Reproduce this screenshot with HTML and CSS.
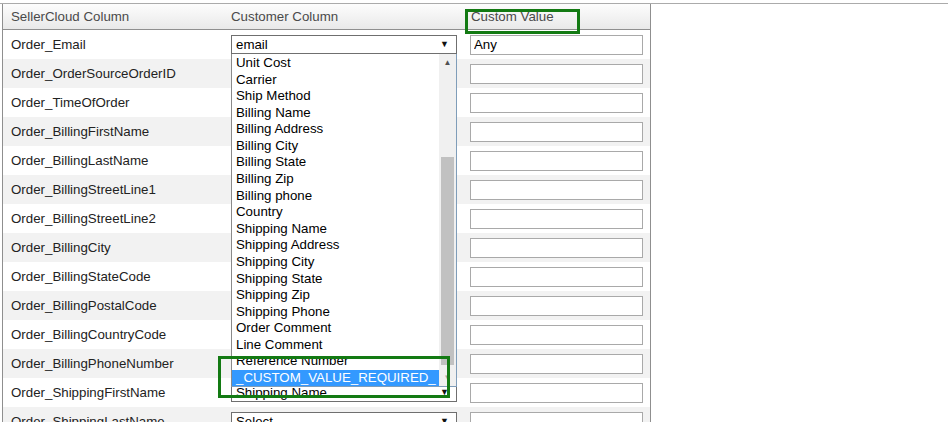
FILE: index.html
```html
<!DOCTYPE html>
<html lang="en">
<head>
  <meta charset="UTF-8">
  <title>Column Mapping</title>
  <link rel="stylesheet" href="styles.css">
</head>
<body>

  <div class="sheet">
    <div class="map-table">
      <!-- Header -->
      <div class="row head">
        <div class="cell c1">SellerCloud Column</div>
        <div class="cell c2">Customer Column</div>
        <div class="cell c3">Custom Value<span class="mark mark-head"></span></div>
      </div>

      <div class="row">
        <div class="cell c1">Order_Email</div>
        <div class="cell c2"><div class="pick">email<span class="arrow">&#9660;</span></div></div>
        <div class="cell c3"><input class="val" type="text" value="Any"></div>
      </div>
      <!-- rows 2-12: their selects sit under the open list -->
      <div class="row alt">
        <div class="cell c1">Order_OrderSourceOrderID</div>
        <div class="cell c2"><div class="pick"></div></div>
        <div class="cell c3"><input class="val" type="text"></div>
      </div>
      <div class="row">
        <div class="cell c1">Order_TimeOfOrder</div>
        <div class="cell c2"><div class="pick"></div></div>
        <div class="cell c3"><input class="val" type="text"></div>
      </div>
      <div class="row alt">
        <div class="cell c1">Order_BillingFirstName</div>
        <div class="cell c2"><div class="pick"></div></div>
        <div class="cell c3"><input class="val" type="text"></div>
      </div>
      <div class="row">
        <div class="cell c1">Order_BillingLastName</div>
        <div class="cell c2"><div class="pick"></div></div>
        <div class="cell c3"><input class="val" type="text"></div>
      </div>
      <div class="row alt">
        <div class="cell c1">Order_BillingStreetLine1</div>
        <div class="cell c2"><div class="pick"></div></div>
        <div class="cell c3"><input class="val" type="text"></div>
      </div>
      <div class="row">
        <div class="cell c1">Order_BillingStreetLine2</div>
        <div class="cell c2"><div class="pick"></div></div>
        <div class="cell c3"><input class="val" type="text"></div>
      </div>
      <div class="row alt">
        <div class="cell c1">Order_BillingCity</div>
        <div class="cell c2"><div class="pick"></div></div>
        <div class="cell c3"><input class="val" type="text"></div>
      </div>
      <div class="row">
        <div class="cell c1">Order_BillingStateCode</div>
        <div class="cell c2"><div class="pick"></div></div>
        <div class="cell c3"><input class="val" type="text"></div>
      </div>
      <div class="row alt">
        <div class="cell c1">Order_BillingPostalCode</div>
        <div class="cell c2"><div class="pick"></div></div>
        <div class="cell c3"><input class="val" type="text"></div>
      </div>
      <div class="row">
        <div class="cell c1">Order_BillingCountryCode</div>
        <div class="cell c2"><div class="pick"></div></div>
        <div class="cell c3"><input class="val" type="text"></div>
      </div>
      <div class="row alt">
        <div class="cell c1">Order_BillingPhoneNumber</div>
        <div class="cell c2"><div class="pick"></div></div>
        <div class="cell c3"><input class="val" type="text"></div>
      </div>
      <div class="row">
        <div class="cell c1">Order_ShippingFirstName</div>
        <div class="cell c2"><div class="pick">Shipping Name<span class="arrow">&#9660;</span></div></div>
        <div class="cell c3"><input class="val" type="text"></div>
      </div>
      <div class="row alt">
        <div class="cell c1">Order_ShippingLastName</div>
        <div class="cell c2"><div class="pick">Select<span class="arrow">&#9660;</span></div></div>
        <div class="cell c3"><input class="val" type="text"></div>
      </div>

      <!-- Open dropdown of the first row -->
      <div class="droplist">
        <ul class="options">
          <li>Unit Cost</li>
          <li>Carrier</li>
          <li>Ship Method</li>
          <li>Billing Name</li>
          <li>Billing Address</li>
          <li>Billing City</li>
          <li>Billing State</li>
          <li>Billing Zip</li>
          <li>Billing phone</li>
          <li>Country</li>
          <li>Shipping Name</li>
          <li>Shipping Address</li>
          <li>Shipping City</li>
          <li>Shipping State</li>
          <li>Shipping Zip</li>
          <li>Shipping Phone</li>
          <li>Order Comment</li>
          <li>Line Comment</li>
          <li>Reference Number</li>
          <li class="selected">_CUSTOM_VALUE_REQUIRED_</li>
        </ul>
        <div class="scrollbar">
          <span class="sb-btn up">&#9650;</span>
          <div class="sb-track"><div class="sb-thumb"></div></div>
          <span class="sb-btn down">&#9660;</span>
        </div>
      </div>

      <span class="mark mark-list"></span>
    </div>
  </div>

</body>
</html>
```

FILE: styles.css
```css
body {
  margin: 0;
  padding-top: 3px;
  font-family: 'Liberation Sans', Arial, sans-serif;
  font-size: 13.3px;
  color: #222;
  background-color: #fff;
  overflow: hidden;
}

.sheet {
  border-top: 1px solid #ababab;
}

.map-table {
  position: relative;
  box-sizing: border-box;
  width: 649px;
  margin-left: 2px;
  border-left: 1px solid #8f8f8f;
  border-right: 1px solid #8f8f8f;
}

.row {
  display: flex;
  align-items: center;
  height: 29px;
}

.row.alt {
  background-color: #f2f2f2;
}

.row.head {
  height: 25px;
  border-bottom: 1px solid #8f8f8f;
  background: linear-gradient(#fdfdfd, #e9e9e9);
  color: #4a4a4a;
}

.cell {
  box-sizing: border-box;
  padding-left: 8px;
  white-space: nowrap;
}

.c1 { width: 220px; }
.c2 { width: 240px; }
.c3 {
  flex: 1;
  padding-left: 7px;
  position: relative;
}

.row.head .c3 {
  padding-left: 8px;
}

.pick {
  position: relative;
  box-sizing: border-box;
  width: 226px;
  height: 19px;
  line-height: 17px;
  padding-left: 4px;
  border: 1px solid #6f6f6f;
  background-color: #fff;
  color: #000;
}

.pick .arrow {
  position: absolute;
  right: 7px;
  top: 0;
  font-size: 9px;
  color: #111;
}

.val {
  box-sizing: border-box;
  width: 173px;
  height: 20px;
  margin: 0;
  padding: 0 3px;
  border: 1px solid #a9a9a9;
  font-family: inherit;
  font-size: 13.3px;
  color: #000;
  outline: none;
}

/* Open dropdown list */
.droplist {
  position: absolute;
  left: 228px;
  top: 50px;
  box-sizing: border-box;
  width: 226px;
  height: 333px;
  display: flex;
  border: 1px solid #7f9db9;
  border-left-color: #8a8a8a;
  border-top: none;
  background-color: #fff;
  overflow: hidden;
}

.options {
  flex: 1;
  margin: 0;
  padding: 1px 0 0 0;
  list-style: none;
  color: #000;
}

.options li {
  height: 16.58px;
  line-height: 16.58px;
  padding-left: 4px;
  white-space: nowrap;
}

.options li.selected {
  background-color: #3399ff;
  color: #fff;
}

.scrollbar {
  width: 17px;
  display: flex;
  flex-direction: column;
  background-color: #f0f0f0;
}

.sb-btn {
  height: 17px;
  line-height: 17px;
  text-align: center;
  font-size: 8px;
  color: #505050;
}

.sb-btn.down {
  color: #a3a3a3;
}

.sb-track {
  flex: 1;
}

.sb-thumb {
  margin: 86px 2px 0 2px;
  height: 208px;
  background-color: #c1c1c1;
}

/* Annotation boxes */
.mark {
  position: absolute;
  box-sizing: border-box;
  border: 3px solid #137a13;
}

.mark-head {
  left: 2px;
  top: 0;
  width: 115px;
  height: 25px;
}

.mark-list {
  left: 215px;
  top: 352px;
  width: 232px;
  height: 42px;
}
```
